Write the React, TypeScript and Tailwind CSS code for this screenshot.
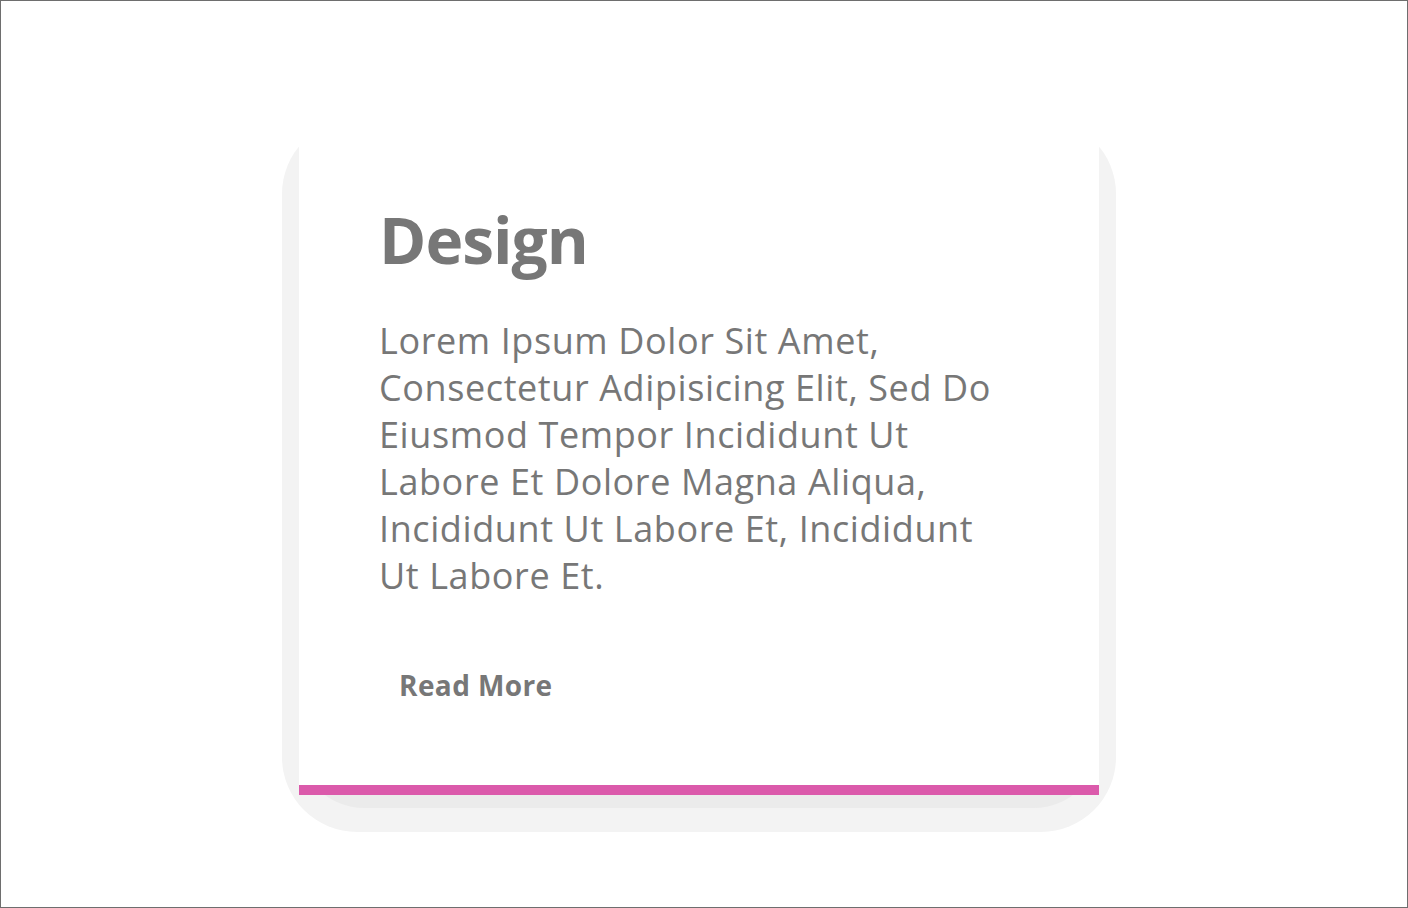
import React from 'react';

const lines = [
  'Lorem Ipsum Dolor Sit Amet,',
  'Consectetur Adipisicing Elit, Sed Do',
  'Eiusmod Tempor Incididunt Ut',
  'Labore Et Dolore Magna Aliqua,',
  'Incididunt Ut Labore Et, Incididunt',
  'Ut Labore Et.',
];

const App: React.FC = () => {
  return (
    <div
      className="w-[1408px] h-[908px] border border-[#6e6e6e] bg-white pt-[118px] pl-[281px]"
      style={{ fontFamily: '"Open Sans", "Noto Sans", sans-serif' }}
    >
      {/* Outer grey frame */}
      <div className="w-[834px] bg-[#f3f3f3] rounded-[75px] px-[17px] pb-[24px]">
        {/* Shadow band under the card */}
        <div className="bg-[#ebebeb] rounded-b-[65px] pb-[13px]">
          <div className="bg-white flex flex-col">
            <div className="pt-[83px] pl-[80px] pr-[40px] pb-[79px]">
              <h2 className="text-[64px] leading-[76.8px] font-bold tracking-[-1px] text-[#777777]">Design</h2>
              <p className="mt-[38px] text-[36px] leading-[47px] tracking-[0.6px] text-[#777777]">
                {lines.map((l, i) => (
                  <React.Fragment key={i}>
                    {l}
                    {i < lines.length - 1 && <br />}
                  </React.Fragment>
                ))}
              </p>
              <button className="mt-[65px] px-[20px] text-[28px] leading-[42px] font-bold tracking-[0.4px] text-[#777777]">
                Read More
              </button>
            </div>
            <div className="h-[10px] bg-[#db5aab]" />
          </div>
        </div>
      </div>
    </div>
  );
};

export default App;
